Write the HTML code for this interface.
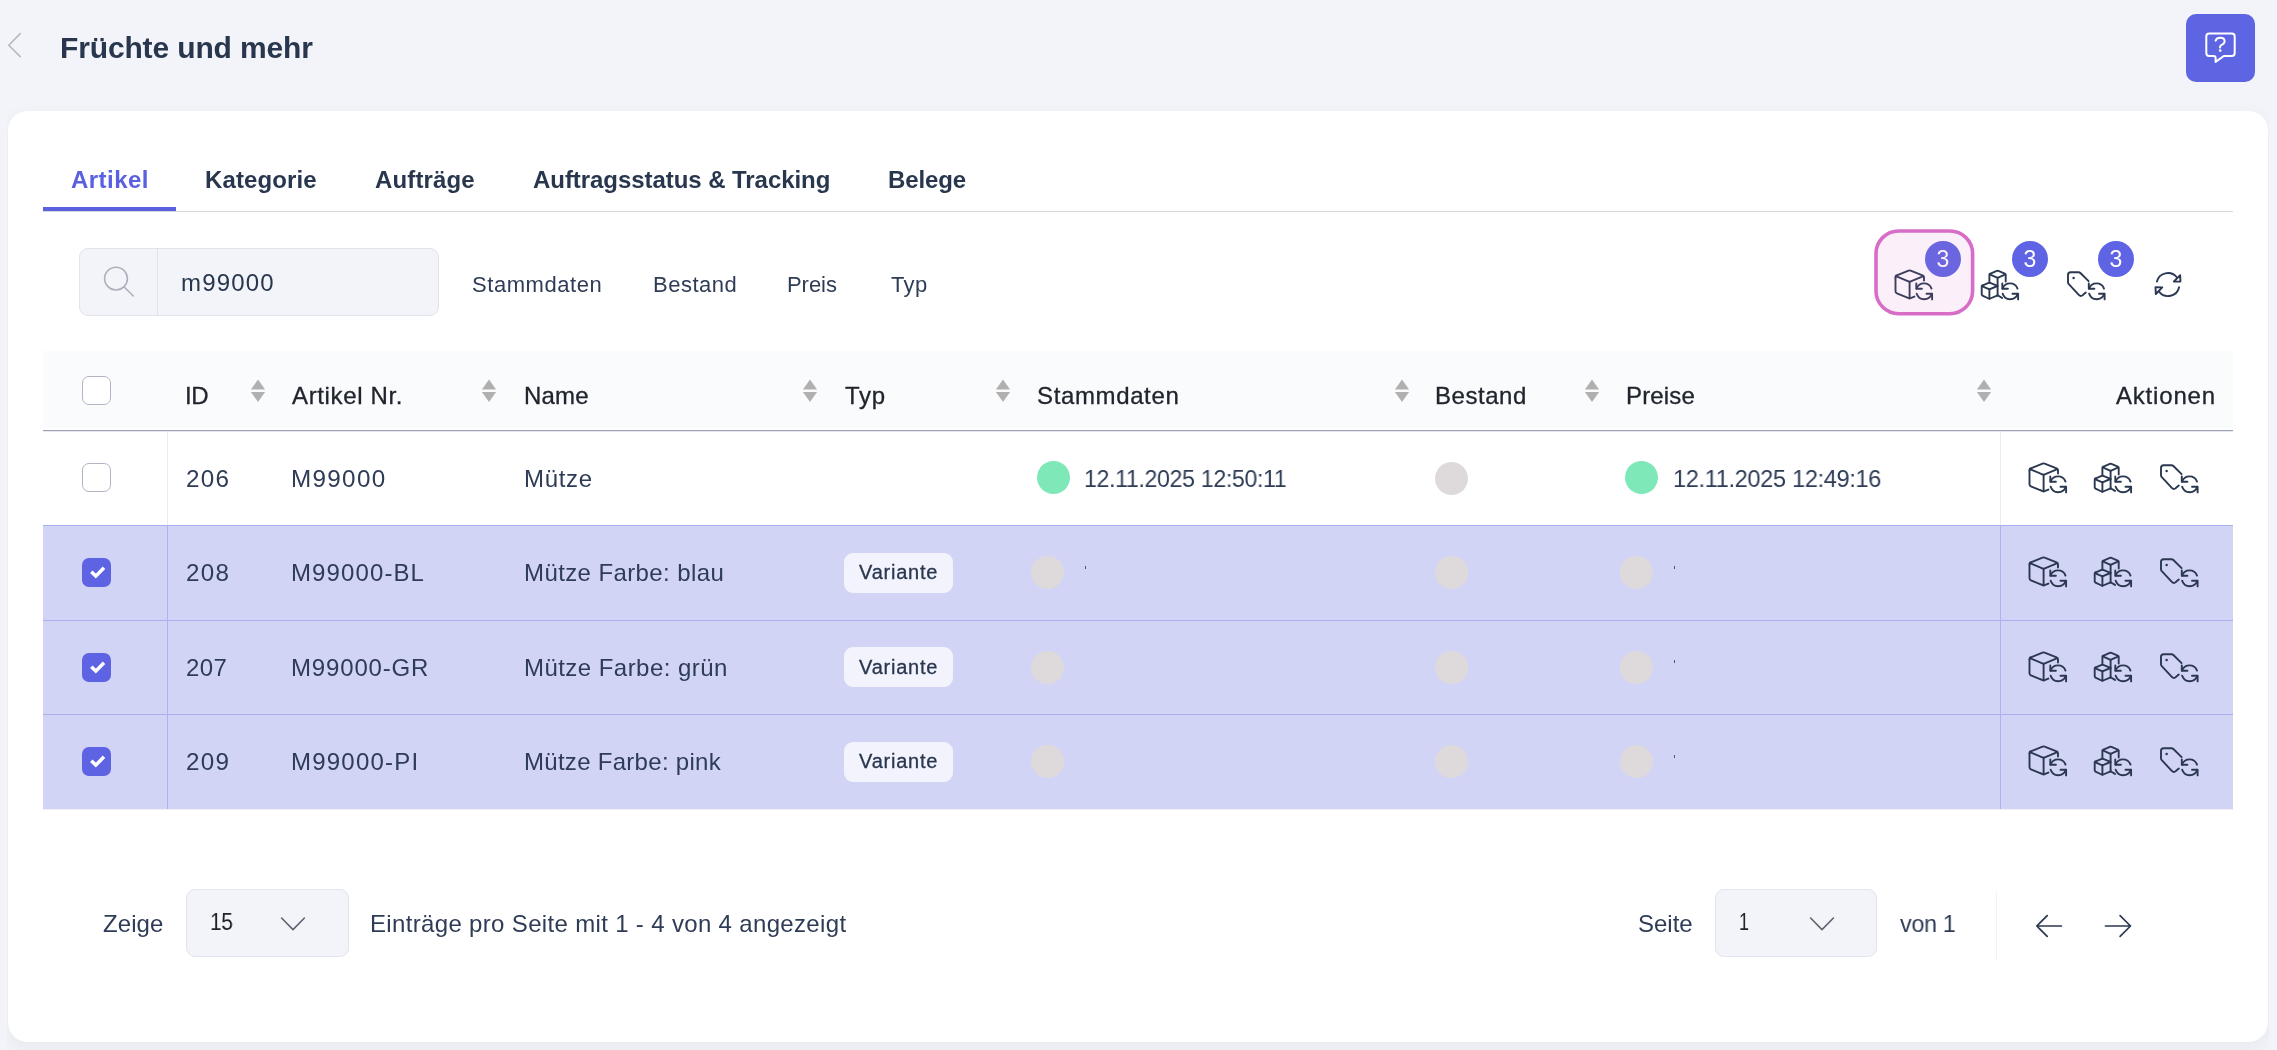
<!DOCTYPE html>
<html lang="de"><head><meta charset="utf-8"><title>Früchte und mehr</title>
<style>
html,body{margin:0;padding:0}
body{width:2277px;height:1050px;overflow:hidden;position:relative;background:#f3f4f9;font-family:"Liberation Sans",sans-serif;}
.t{position:absolute;line-height:40px;height:40px;white-space:nowrap;transform-origin:0 50%;will-change:transform;}
.abs{position:absolute;}
.ic{position:absolute;overflow:visible;}
.clip{position:absolute;left:7px;top:0;width:2262px;height:1050px;overflow:hidden;}
.card{position:absolute;left:1px;top:111px;width:2260px;height:931px;background:#fff;border-radius:20px;box-shadow:0 6px 20px rgba(30,40,80,0.055);}
.cb{position:absolute;width:27px;height:27px;border:1px solid #b3b5c4;border-radius:7px;background:#fff;}
.cbc{position:absolute;width:29px;height:29px;border-radius:7px;background:#5d63e3;}
.dot{position:absolute;width:33px;height:33px;border-radius:50%;}
.sel{position:absolute;height:68px;border:1px solid #e3e5ee;border-radius:9px;background:#f3f4f9;box-sizing:border-box;}
.badge{will-change:transform;position:absolute;width:36px;height:36px;border-radius:50%;background:#5e64e4;color:#fff;font-size:23px;line-height:36px;text-align:center;}
.var{position:absolute;width:109px;height:40px;border-radius:9px;background:#f3f3fd;}

</style></head><body>
<svg class="ic" style="left:6px;top:30px" width="20" height="30" viewBox="0 0 20 30" fill="none" stroke="#b7b8c6" stroke-width="1.6" stroke-linecap="round" stroke-linejoin="round"><path d="M14.2 3.6 L2.8 15.2 L14.2 26.6"/></svg>
<div class="t" style="left:60.40px;top:27.50px;font-size:30px;color:#29374e;font-weight:bold;letter-spacing:-0.143px;">Früchte und mehr</div>
<div class="abs" style="left:2186px;top:14px;width:69px;height:68px;border-radius:10px;background:#5e65e3"></div>
<svg class="ic" style="left:2200px;top:28px" width="40" height="40" viewBox="0 0 40 40" fill="none" stroke="#fff" stroke-width="2" stroke-linecap="round" stroke-linejoin="round"><path d="M9.2 5.6 H31.8 Q34.7 5.6 34.7 8.5 V25.1 Q34.7 28 31.8 28 H23.8 L15.6 33.9 V30 Q15.6 28 13.6 28 H9.2 Q6.3 28 6.3 25.1 V8.5 Q6.3 5.6 9.2 5.6 Z"/><path d="M15.6 12.6 Q16.6 9.8 20.2 9.8 Q24.6 9.8 24.6 13.2 Q24.6 15.4 22 16.6 Q20 17.6 20 19.4"/><circle cx="20.2" cy="22.6" r="1.3" fill="#fff" stroke="none"/></svg>
<div class="clip"><div class="card"></div></div>
<div class="t" style="left:71.00px;top:159.50px;font-size:24px;color:#5a60df;font-weight:bold;letter-spacing:0.462px;">Artikel</div>
<div class="t" style="left:205.00px;top:159.50px;font-size:24px;color:#29374e;font-weight:bold;letter-spacing:0.119px;">Kategorie</div>
<div class="t" style="left:375.00px;top:159.50px;font-size:24px;color:#29374e;font-weight:bold;letter-spacing:0.139px;">Aufträge</div>
<div class="t" style="left:533.30px;top:159.50px;font-size:24px;color:#29374e;font-weight:bold;letter-spacing:-0.057px;">Auftragsstatus &amp; Tracking</div>
<div class="t" style="left:888.30px;top:159.50px;font-size:24px;color:#29374e;font-weight:bold;letter-spacing:-0.131px;">Belege</div>
<div class="abs" style="left:43px;top:211px;width:2190px;height:1px;background:#d4d8df"></div>
<div class="abs" style="left:43px;top:207px;width:133px;height:4px;background:#5a60df"></div>
<div class="abs" style="left:79px;top:248px;width:360px;height:68px;box-sizing:border-box;border:1px solid #e1e3ec;border-radius:9px;background:#f3f4f9"></div>
<div class="abs" style="left:157px;top:249px;width:1px;height:66px;background:#e1e3ec"></div>
<svg class="ic" style="left:100px;top:262px" width="40" height="40" viewBox="0 0 40 40" fill="none" stroke="#aeafbd" stroke-width="1.6" stroke-linecap="round"><circle cx="16" cy="16.6" r="11.4"/><path d="M24.4 25.2 L33.2 34"/></svg>
<div class="t" style="left:181.30px;top:262.80px;font-size:24px;color:#29374e;letter-spacing:1.163px;">m99000</div>
<div class="t" style="left:471.60px;top:264.80px;font-size:22px;color:#2e3c56;letter-spacing:0.568px;">Stammdaten</div>
<div class="t" style="left:652.50px;top:264.80px;font-size:22px;color:#2e3c56;letter-spacing:0.501px;">Bestand</div>
<div class="t" style="left:787.40px;top:264.80px;font-size:22px;color:#2e3c56;letter-spacing:-0.056px;">Preis</div>
<div class="t" style="left:891.00px;top:264.80px;font-size:22px;color:#2e3c56;letter-spacing:0.388px;">Typ</div>
<svg class="ic" style="left:1894.00px;top:267.60px;color:#2b3850" width="40" height="33" viewBox="0 0 40 33" fill="none" stroke="currentColor" stroke-width="1.9" stroke-linecap="round" stroke-linejoin="round"><path d="M2.2 7.6 L14.6 2.6 Q15.6 2.2 16.6 2.6 L28.6 7.4 Q30 8 30 9.6 V12.6"/><path d="M1.9 8.2 L15.6 13.8 L29.4 8.2"/><path d="M15.6 13.8 V30.4"/><path d="M1.5 9.4 V23.2 Q1.5 24.7 2.9 25.3 L14.6 30.1 Q15.6 30.5 16.6 30.1 L20.4 28.6"/><path d="M1.5 9.4 Q1.5 8 2.2 7.6"/><g transform="translate(0 0)"><path d="M22.6 20.6 A7.9 7.9 0 0 1 37.5 20.6"/><path d="M22.3 15.4 V20.7 H27.9"/><path d="M22.6 25.6 A7.9 7.9 0 0 0 37.7 25.8"/><path d="M32.5 25.8 H38.1 V31.4"/></g></svg>
<svg class="ic" style="left:1981.00px;top:267.60px;color:#2b3850" width="40" height="33" viewBox="0 0 40 33" fill="none" stroke="currentColor" stroke-width="1.9" stroke-linecap="round" stroke-linejoin="round"><path d="M9 5.8 L15.8 2.9 Q16.6 2.6 17.4 2.9 L23.8 5.6 Q24.7 6 24.7 7 V13.6"/><path d="M8.7 6.4 L16.6 9.8 L24.4 6.4"/><path d="M8.4 7 Q8.4 6.1 9 5.8 M8.4 7 V14.6"/><path d="M16.6 9.8 V27.6"/><g transform="translate(0 -0.7)"><path d="M1.2 18.3 L7.6 15.6 Q8.4 15.3 9.2 15.6 L16.6 18.6"/><path d="M0.9 18.9 L8.4 22 L16.4 18.7"/><path d="M8.4 22 V31.4"/><path d="M0.7 19.6 Q0.7 18.6 1.2 18.3 M0.7 19.6 V27 Q0.7 27.9 1.5 28.3 L7.6 31.2 Q8.4 31.6 9.2 31.2 L16.6 28"/><path d="M16.6 28 L21 30.6"/></g><g transform="translate(-1.0 0)"><path d="M22.6 20.6 A7.9 7.9 0 0 1 37.5 20.6"/><path d="M22.3 15.4 V20.7 H27.9"/><path d="M22.6 25.6 A7.9 7.9 0 0 0 37.7 25.8"/><path d="M32.5 25.8 H38.1 V31.4"/></g></svg>
<svg class="ic" style="left:2067.20px;top:267.60px;color:#2b3850" width="40" height="33" viewBox="0 0 40 33" fill="none" stroke="currentColor" stroke-width="1.9" stroke-linecap="round" stroke-linejoin="round"><path d="M21.6 13.2 L13.4 5 Q12.6 4.2 11.4 4.2 H3.6 Q1 4.2 1 6.8 V14.2 Q1 15.4 1.8 16.2 L11.8 26.8 Q13.8 28.9 15.8 27.1 L18.8 24.6"/><circle cx="6.6" cy="10" r="1.25" fill="currentColor" stroke="none"/><g transform="translate(-0.5 0)"><path d="M22.6 20.6 A7.9 7.9 0 0 1 37.5 20.6"/><path d="M22.3 15.4 V20.7 H27.9"/><path d="M22.6 25.6 A7.9 7.9 0 0 0 37.7 25.8"/><path d="M32.5 25.8 H38.1 V31.4"/></g></svg>
<svg class="ic" style="left:2153.50px;top:272.40px;color:#2b3850" width="30" height="28" viewBox="0 0 30 28" fill="none" stroke="currentColor" stroke-width="1.9" stroke-linecap="round" stroke-linejoin="round"><path d="M2.9 9.6 A11.4 11.4 0 0 1 22.6 5"/><path d="M26.2 3.2 L26.4 9.6 L19.9 9.5 Z"/><path d="M25.1 15.2 A11.4 11.4 0 0 1 5.2 19.9"/><path d="M1.5 15.2 L8.3 15.4 L1.8 22 Z"/></svg>
<div class="badge" style="left:1925.0px;top:240.7px">3</div>
<div class="badge" style="left:2011.7px;top:240.7px">3</div>
<div class="badge" style="left:2098.0px;top:240.7px">3</div>
<svg class="ic" style="left:1870px;top:225px" width="110" height="96" viewBox="0 0 110 96"><rect x="6" y="6" width="96.6" height="82.7" rx="22.6" fill="#d86dc7" fill-opacity="0.105" stroke="#d86dc7" stroke-width="3.6"/></svg>
<div class="abs" style="left:43px;top:351px;width:2190px;height:78px;background:#fafbfd"></div>
<div class="abs" style="left:43px;top:428px;width:2190px;height:1px;background:#fcfdfe"></div>
<div class="abs" style="left:43px;top:430px;width:2190px;height:1px;background:#9ba2b5"></div>
<div class="abs" style="left:43px;top:431px;width:2190px;height:1px;background:#e6e8ee"></div>
<div class="abs" style="left:43px;top:809px;width:2190px;height:1px;background:#f1f1f4"></div>
<div class="abs" style="left:43px;top:525px;width:2190px;height:95px;background:#d2d4f6;border-top:1px solid #abaff0;box-sizing:border-box"></div>
<div class="abs" style="left:43px;top:620px;width:2190px;height:94px;background:#d2d4f6;border-top:1px solid #abaff0;box-sizing:border-box"></div>
<div class="abs" style="left:43px;top:714px;width:2190px;height:95px;background:#d2d4f6;border-top:1px solid #abaff0;box-sizing:border-box"></div>
<div class="abs" style="left:167px;top:432px;width:1px;height:93px;background:#ececf2"></div>
<div class="abs" style="left:2000px;top:432px;width:1px;height:93px;background:#ececf2"></div>
<div class="abs" style="left:167px;top:525px;width:1px;height:284px;background:#adb1f1"></div>
<div class="abs" style="left:2000px;top:525px;width:1px;height:284px;background:#adb1f1"></div>
<div class="cb" style="left:82px;top:376px"></div>
<div class="t" style="left:185.22px;top:376.30px;font-size:24px;color:#20252d;letter-spacing:-0.350px;transform:scaleX(0.9898);-webkit-text-stroke:0.3px #20252d;">ID</div>
<svg class="ic" style="left:249.5px;top:378px" width="16" height="26" viewBox="0 0 16 26"><path d="M8 1.5 L15.1 11.5 H0.9 Z M0.9 14.1 H15.1 L8 23.9 Z" fill="#b0b0b0"/></svg>
<div class="t" style="left:292.30px;top:376.30px;font-size:24px;color:#20252d;letter-spacing:0.635px;-webkit-text-stroke:0.3px #20252d;">Artikel Nr.</div>
<svg class="ic" style="left:481.2px;top:378px" width="16" height="26" viewBox="0 0 16 26"><path d="M8 1.5 L15.1 11.5 H0.9 Z M0.9 14.1 H15.1 L8 23.9 Z" fill="#b0b0b0"/></svg>
<div class="t" style="left:524.00px;top:376.30px;font-size:24px;color:#20252d;letter-spacing:0.209px;-webkit-text-stroke:0.3px #20252d;">Name</div>
<svg class="ic" style="left:802.4px;top:378px" width="16" height="26" viewBox="0 0 16 26"><path d="M8 1.5 L15.1 11.5 H0.9 Z M0.9 14.1 H15.1 L8 23.9 Z" fill="#b0b0b0"/></svg>
<div class="t" style="left:844.80px;top:376.30px;font-size:24px;color:#20252d;letter-spacing:0.682px;-webkit-text-stroke:0.3px #20252d;">Typ</div>
<svg class="ic" style="left:995.1px;top:378px" width="16" height="26" viewBox="0 0 16 26"><path d="M8 1.5 L15.1 11.5 H0.9 Z M0.9 14.1 H15.1 L8 23.9 Z" fill="#b0b0b0"/></svg>
<div class="t" style="left:1037.30px;top:376.30px;font-size:24px;color:#20252d;letter-spacing:0.631px;-webkit-text-stroke:0.3px #20252d;">Stammdaten</div>
<svg class="ic" style="left:1393.9px;top:378px" width="16" height="26" viewBox="0 0 16 26"><path d="M8 1.5 L15.1 11.5 H0.9 Z M0.9 14.1 H15.1 L8 23.9 Z" fill="#b0b0b0"/></svg>
<div class="t" style="left:1435.30px;top:376.30px;font-size:24px;color:#20252d;letter-spacing:0.547px;-webkit-text-stroke:0.3px #20252d;">Bestand</div>
<svg class="ic" style="left:1583.9px;top:378px" width="16" height="26" viewBox="0 0 16 26"><path d="M8 1.5 L15.1 11.5 H0.9 Z M0.9 14.1 H15.1 L8 23.9 Z" fill="#b0b0b0"/></svg>
<div class="t" style="left:1626.30px;top:376.30px;font-size:24px;color:#20252d;letter-spacing:0.144px;-webkit-text-stroke:0.3px #20252d;">Preise</div>
<svg class="ic" style="left:1975.9px;top:378px" width="16" height="26" viewBox="0 0 16 26"><path d="M8 1.5 L15.1 11.5 H0.9 Z M0.9 14.1 H15.1 L8 23.9 Z" fill="#b0b0b0"/></svg>
<div class="t" style="left:2116.20px;top:376.30px;font-size:24px;color:#20252d;letter-spacing:0.807px;-webkit-text-stroke:0.3px #20252d;">Aktionen</div>
<div class="cb" style="left:82px;top:463.00px"></div>
<div class="t" style="left:185.59px;top:458.50px;font-size:24px;color:#2e3c56;letter-spacing:1.300px;transform:scaleX(1.0098);">206</div>
<div class="t" style="left:291.19px;top:458.50px;font-size:24px;color:#2e3c56;letter-spacing:1.300px;transform:scaleX(1.0100);">M99000</div>
<div class="t" style="left:524.00px;top:458.50px;font-size:24px;color:#2e3c56;letter-spacing:0.673px;">Mütze</div>
<div class="dot" style="left:1037.0px;top:461.00px;background:#7fe8b9"></div>
<div class="t" style="left:1084.24px;top:458.50px;font-size:24px;color:#2e3c56;letter-spacing:-0.350px;transform:scaleX(0.9637);">12.11.2025 12:50:11</div>
<div class="dot" style="left:1434.8px;top:461.50px;background:#dedadb"></div>
<div class="dot" style="left:1625.3px;top:461.00px;background:#7fe8b9"></div>
<div class="t" style="left:1672.72px;top:458.50px;font-size:24px;color:#2e3c56;letter-spacing:-0.350px;transform:scaleX(0.9821);">12.11.2025 12:49:16</div>
<svg class="ic" style="left:2028.20px;top:460.70px;color:#2b3850" width="40" height="33" viewBox="0 0 40 33" fill="none" stroke="currentColor" stroke-width="1.9" stroke-linecap="round" stroke-linejoin="round"><path d="M2.2 7.6 L14.6 2.6 Q15.6 2.2 16.6 2.6 L28.6 7.4 Q30 8 30 9.6 V12.6"/><path d="M1.9 8.2 L15.6 13.8 L29.4 8.2"/><path d="M15.6 13.8 V30.4"/><path d="M1.5 9.4 V23.2 Q1.5 24.7 2.9 25.3 L14.6 30.1 Q15.6 30.5 16.6 30.1 L20.4 28.6"/><path d="M1.5 9.4 Q1.5 8 2.2 7.6"/><g transform="translate(0 0)"><path d="M22.6 20.6 A7.9 7.9 0 0 1 37.5 20.6"/><path d="M22.3 15.4 V20.7 H27.9"/><path d="M22.6 25.6 A7.9 7.9 0 0 0 37.7 25.8"/><path d="M32.5 25.8 H38.1 V31.4"/></g></svg>
<svg class="ic" style="left:2094.00px;top:460.70px;color:#2b3850" width="40" height="33" viewBox="0 0 40 33" fill="none" stroke="currentColor" stroke-width="1.9" stroke-linecap="round" stroke-linejoin="round"><path d="M9 5.8 L15.8 2.9 Q16.6 2.6 17.4 2.9 L23.8 5.6 Q24.7 6 24.7 7 V13.6"/><path d="M8.7 6.4 L16.6 9.8 L24.4 6.4"/><path d="M8.4 7 Q8.4 6.1 9 5.8 M8.4 7 V14.6"/><path d="M16.6 9.8 V27.6"/><g transform="translate(0 -0.7)"><path d="M1.2 18.3 L7.6 15.6 Q8.4 15.3 9.2 15.6 L16.6 18.6"/><path d="M0.9 18.9 L8.4 22 L16.4 18.7"/><path d="M8.4 22 V31.4"/><path d="M0.7 19.6 Q0.7 18.6 1.2 18.3 M0.7 19.6 V27 Q0.7 27.9 1.5 28.3 L7.6 31.2 Q8.4 31.6 9.2 31.2 L16.6 28"/><path d="M16.6 28 L21 30.6"/></g><g transform="translate(-1.0 0)"><path d="M22.6 20.6 A7.9 7.9 0 0 1 37.5 20.6"/><path d="M22.3 15.4 V20.7 H27.9"/><path d="M22.6 25.6 A7.9 7.9 0 0 0 37.7 25.8"/><path d="M32.5 25.8 H38.1 V31.4"/></g></svg>
<svg class="ic" style="left:2159.60px;top:460.70px;color:#2b3850" width="40" height="33" viewBox="0 0 40 33" fill="none" stroke="currentColor" stroke-width="1.9" stroke-linecap="round" stroke-linejoin="round"><path d="M21.6 13.2 L13.4 5 Q12.6 4.2 11.4 4.2 H3.6 Q1 4.2 1 6.8 V14.2 Q1 15.4 1.8 16.2 L11.8 26.8 Q13.8 28.9 15.8 27.1 L18.8 24.6"/><circle cx="6.6" cy="10" r="1.25" fill="currentColor" stroke="none"/><g transform="translate(-0.5 0)"><path d="M22.6 20.6 A7.9 7.9 0 0 1 37.5 20.6"/><path d="M22.3 15.4 V20.7 H27.9"/><path d="M22.6 25.6 A7.9 7.9 0 0 0 37.7 25.8"/><path d="M32.5 25.8 H38.1 V31.4"/></g></svg>
<div class="cbc" style="left:82px;top:558.00px"><svg width="29" height="29" viewBox="0 0 29 29" fill="none" stroke="#fff" stroke-width="3.5" stroke-linecap="butt" stroke-linejoin="miter"><path d="M9.3 13.7 L13.8 18.1 L22 9.7"/></svg></div>
<div class="t" style="left:185.59px;top:553.00px;font-size:24px;color:#2e3c56;letter-spacing:1.300px;transform:scaleX(1.0074);">208</div>
<div class="t" style="left:291.20px;top:553.00px;font-size:24px;color:#2e3c56;letter-spacing:1.109px;">M99000-BL</div>
<div class="t" style="left:524.00px;top:553.00px;font-size:24px;color:#2e3c56;letter-spacing:0.395px;">Mütze Farbe: blau</div>
<div class="var" style="left:844px;top:552.50px"></div>
<div class="t" style="left:859.40px;top:552.30px;font-size:20px;color:#29374e;letter-spacing:0.774px;-webkit-text-stroke:0.3px #29374e;">Variante</div>
<div class="dot" style="left:1030.7px;top:556.00px;background:#dedadb"></div>
<div class="dot" style="left:1434.8px;top:556.00px;background:#dedadb"></div>
<div class="dot" style="left:1619.9px;top:556.00px;background:#dedadb"></div>
<div class="abs" style="left:1674px;top:565.50px;width:1px;height:3px;background:#4a5670"></div>
<div class="abs" style="left:1084.5px;top:565.50px;width:1px;height:3px;background:#4a5670"></div>
<svg class="ic" style="left:2028.20px;top:555.20px;color:#2b3850" width="40" height="33" viewBox="0 0 40 33" fill="none" stroke="currentColor" stroke-width="1.9" stroke-linecap="round" stroke-linejoin="round"><path d="M2.2 7.6 L14.6 2.6 Q15.6 2.2 16.6 2.6 L28.6 7.4 Q30 8 30 9.6 V12.6"/><path d="M1.9 8.2 L15.6 13.8 L29.4 8.2"/><path d="M15.6 13.8 V30.4"/><path d="M1.5 9.4 V23.2 Q1.5 24.7 2.9 25.3 L14.6 30.1 Q15.6 30.5 16.6 30.1 L20.4 28.6"/><path d="M1.5 9.4 Q1.5 8 2.2 7.6"/><g transform="translate(0 0)"><path d="M22.6 20.6 A7.9 7.9 0 0 1 37.5 20.6"/><path d="M22.3 15.4 V20.7 H27.9"/><path d="M22.6 25.6 A7.9 7.9 0 0 0 37.7 25.8"/><path d="M32.5 25.8 H38.1 V31.4"/></g></svg>
<svg class="ic" style="left:2094.00px;top:555.20px;color:#2b3850" width="40" height="33" viewBox="0 0 40 33" fill="none" stroke="currentColor" stroke-width="1.9" stroke-linecap="round" stroke-linejoin="round"><path d="M9 5.8 L15.8 2.9 Q16.6 2.6 17.4 2.9 L23.8 5.6 Q24.7 6 24.7 7 V13.6"/><path d="M8.7 6.4 L16.6 9.8 L24.4 6.4"/><path d="M8.4 7 Q8.4 6.1 9 5.8 M8.4 7 V14.6"/><path d="M16.6 9.8 V27.6"/><g transform="translate(0 -0.7)"><path d="M1.2 18.3 L7.6 15.6 Q8.4 15.3 9.2 15.6 L16.6 18.6"/><path d="M0.9 18.9 L8.4 22 L16.4 18.7"/><path d="M8.4 22 V31.4"/><path d="M0.7 19.6 Q0.7 18.6 1.2 18.3 M0.7 19.6 V27 Q0.7 27.9 1.5 28.3 L7.6 31.2 Q8.4 31.6 9.2 31.2 L16.6 28"/><path d="M16.6 28 L21 30.6"/></g><g transform="translate(-1.0 0)"><path d="M22.6 20.6 A7.9 7.9 0 0 1 37.5 20.6"/><path d="M22.3 15.4 V20.7 H27.9"/><path d="M22.6 25.6 A7.9 7.9 0 0 0 37.7 25.8"/><path d="M32.5 25.8 H38.1 V31.4"/></g></svg>
<svg class="ic" style="left:2159.60px;top:555.20px;color:#2b3850" width="40" height="33" viewBox="0 0 40 33" fill="none" stroke="currentColor" stroke-width="1.9" stroke-linecap="round" stroke-linejoin="round"><path d="M21.6 13.2 L13.4 5 Q12.6 4.2 11.4 4.2 H3.6 Q1 4.2 1 6.8 V14.2 Q1 15.4 1.8 16.2 L11.8 26.8 Q13.8 28.9 15.8 27.1 L18.8 24.6"/><circle cx="6.6" cy="10" r="1.25" fill="currentColor" stroke="none"/><g transform="translate(-0.5 0)"><path d="M22.6 20.6 A7.9 7.9 0 0 1 37.5 20.6"/><path d="M22.3 15.4 V20.7 H27.9"/><path d="M22.6 25.6 A7.9 7.9 0 0 0 37.7 25.8"/><path d="M32.5 25.8 H38.1 V31.4"/></g></svg>
<div class="cbc" style="left:82px;top:652.50px"><svg width="29" height="29" viewBox="0 0 29 29" fill="none" stroke="#fff" stroke-width="3.5" stroke-linecap="butt" stroke-linejoin="miter"><path d="M9.3 13.7 L13.8 18.1 L22 9.7"/></svg></div>
<div class="t" style="left:185.60px;top:647.50px;font-size:24px;color:#2e3c56;letter-spacing:0.452px;">207</div>
<div class="t" style="left:291.20px;top:647.50px;font-size:24px;color:#2e3c56;letter-spacing:0.839px;">M99000-GR</div>
<div class="t" style="left:524.00px;top:647.50px;font-size:24px;color:#2e3c56;letter-spacing:0.454px;">Mütze Farbe: grün</div>
<div class="var" style="left:844px;top:647.00px"></div>
<div class="t" style="left:859.40px;top:646.80px;font-size:20px;color:#29374e;letter-spacing:0.774px;-webkit-text-stroke:0.3px #29374e;">Variante</div>
<div class="dot" style="left:1030.7px;top:650.50px;background:#dedadb"></div>
<div class="dot" style="left:1434.8px;top:650.50px;background:#dedadb"></div>
<div class="dot" style="left:1619.9px;top:650.50px;background:#dedadb"></div>
<div class="abs" style="left:1674px;top:660.00px;width:1px;height:3px;background:#4a5670"></div>
<svg class="ic" style="left:2028.20px;top:649.70px;color:#2b3850" width="40" height="33" viewBox="0 0 40 33" fill="none" stroke="currentColor" stroke-width="1.9" stroke-linecap="round" stroke-linejoin="round"><path d="M2.2 7.6 L14.6 2.6 Q15.6 2.2 16.6 2.6 L28.6 7.4 Q30 8 30 9.6 V12.6"/><path d="M1.9 8.2 L15.6 13.8 L29.4 8.2"/><path d="M15.6 13.8 V30.4"/><path d="M1.5 9.4 V23.2 Q1.5 24.7 2.9 25.3 L14.6 30.1 Q15.6 30.5 16.6 30.1 L20.4 28.6"/><path d="M1.5 9.4 Q1.5 8 2.2 7.6"/><g transform="translate(0 0)"><path d="M22.6 20.6 A7.9 7.9 0 0 1 37.5 20.6"/><path d="M22.3 15.4 V20.7 H27.9"/><path d="M22.6 25.6 A7.9 7.9 0 0 0 37.7 25.8"/><path d="M32.5 25.8 H38.1 V31.4"/></g></svg>
<svg class="ic" style="left:2094.00px;top:649.70px;color:#2b3850" width="40" height="33" viewBox="0 0 40 33" fill="none" stroke="currentColor" stroke-width="1.9" stroke-linecap="round" stroke-linejoin="round"><path d="M9 5.8 L15.8 2.9 Q16.6 2.6 17.4 2.9 L23.8 5.6 Q24.7 6 24.7 7 V13.6"/><path d="M8.7 6.4 L16.6 9.8 L24.4 6.4"/><path d="M8.4 7 Q8.4 6.1 9 5.8 M8.4 7 V14.6"/><path d="M16.6 9.8 V27.6"/><g transform="translate(0 -0.7)"><path d="M1.2 18.3 L7.6 15.6 Q8.4 15.3 9.2 15.6 L16.6 18.6"/><path d="M0.9 18.9 L8.4 22 L16.4 18.7"/><path d="M8.4 22 V31.4"/><path d="M0.7 19.6 Q0.7 18.6 1.2 18.3 M0.7 19.6 V27 Q0.7 27.9 1.5 28.3 L7.6 31.2 Q8.4 31.6 9.2 31.2 L16.6 28"/><path d="M16.6 28 L21 30.6"/></g><g transform="translate(-1.0 0)"><path d="M22.6 20.6 A7.9 7.9 0 0 1 37.5 20.6"/><path d="M22.3 15.4 V20.7 H27.9"/><path d="M22.6 25.6 A7.9 7.9 0 0 0 37.7 25.8"/><path d="M32.5 25.8 H38.1 V31.4"/></g></svg>
<svg class="ic" style="left:2159.60px;top:649.70px;color:#2b3850" width="40" height="33" viewBox="0 0 40 33" fill="none" stroke="currentColor" stroke-width="1.9" stroke-linecap="round" stroke-linejoin="round"><path d="M21.6 13.2 L13.4 5 Q12.6 4.2 11.4 4.2 H3.6 Q1 4.2 1 6.8 V14.2 Q1 15.4 1.8 16.2 L11.8 26.8 Q13.8 28.9 15.8 27.1 L18.8 24.6"/><circle cx="6.6" cy="10" r="1.25" fill="currentColor" stroke="none"/><g transform="translate(-0.5 0)"><path d="M22.6 20.6 A7.9 7.9 0 0 1 37.5 20.6"/><path d="M22.3 15.4 V20.7 H27.9"/><path d="M22.6 25.6 A7.9 7.9 0 0 0 37.7 25.8"/><path d="M32.5 25.8 H38.1 V31.4"/></g></svg>
<div class="cbc" style="left:82px;top:747.00px"><svg width="29" height="29" viewBox="0 0 29 29" fill="none" stroke="#fff" stroke-width="3.5" stroke-linecap="butt" stroke-linejoin="miter"><path d="M9.3 13.7 L13.8 18.1 L22 9.7"/></svg></div>
<div class="t" style="left:185.59px;top:742.00px;font-size:24px;color:#2e3c56;letter-spacing:1.300px;transform:scaleX(1.0098);">209</div>
<div class="t" style="left:291.20px;top:742.00px;font-size:24px;color:#2e3c56;letter-spacing:1.221px;">M99000-PI</div>
<div class="t" style="left:524.00px;top:742.00px;font-size:24px;color:#2e3c56;letter-spacing:0.289px;">Mütze Farbe: pink</div>
<div class="var" style="left:844px;top:741.50px"></div>
<div class="t" style="left:859.40px;top:741.30px;font-size:20px;color:#29374e;letter-spacing:0.774px;-webkit-text-stroke:0.3px #29374e;">Variante</div>
<div class="dot" style="left:1030.7px;top:745.00px;background:#dedadb"></div>
<div class="dot" style="left:1434.8px;top:745.00px;background:#dedadb"></div>
<div class="dot" style="left:1619.9px;top:745.00px;background:#dedadb"></div>
<div class="abs" style="left:1674px;top:754.50px;width:1px;height:3px;background:#4a5670"></div>
<svg class="ic" style="left:2028.20px;top:744.20px;color:#2b3850" width="40" height="33" viewBox="0 0 40 33" fill="none" stroke="currentColor" stroke-width="1.9" stroke-linecap="round" stroke-linejoin="round"><path d="M2.2 7.6 L14.6 2.6 Q15.6 2.2 16.6 2.6 L28.6 7.4 Q30 8 30 9.6 V12.6"/><path d="M1.9 8.2 L15.6 13.8 L29.4 8.2"/><path d="M15.6 13.8 V30.4"/><path d="M1.5 9.4 V23.2 Q1.5 24.7 2.9 25.3 L14.6 30.1 Q15.6 30.5 16.6 30.1 L20.4 28.6"/><path d="M1.5 9.4 Q1.5 8 2.2 7.6"/><g transform="translate(0 0)"><path d="M22.6 20.6 A7.9 7.9 0 0 1 37.5 20.6"/><path d="M22.3 15.4 V20.7 H27.9"/><path d="M22.6 25.6 A7.9 7.9 0 0 0 37.7 25.8"/><path d="M32.5 25.8 H38.1 V31.4"/></g></svg>
<svg class="ic" style="left:2094.00px;top:744.20px;color:#2b3850" width="40" height="33" viewBox="0 0 40 33" fill="none" stroke="currentColor" stroke-width="1.9" stroke-linecap="round" stroke-linejoin="round"><path d="M9 5.8 L15.8 2.9 Q16.6 2.6 17.4 2.9 L23.8 5.6 Q24.7 6 24.7 7 V13.6"/><path d="M8.7 6.4 L16.6 9.8 L24.4 6.4"/><path d="M8.4 7 Q8.4 6.1 9 5.8 M8.4 7 V14.6"/><path d="M16.6 9.8 V27.6"/><g transform="translate(0 -0.7)"><path d="M1.2 18.3 L7.6 15.6 Q8.4 15.3 9.2 15.6 L16.6 18.6"/><path d="M0.9 18.9 L8.4 22 L16.4 18.7"/><path d="M8.4 22 V31.4"/><path d="M0.7 19.6 Q0.7 18.6 1.2 18.3 M0.7 19.6 V27 Q0.7 27.9 1.5 28.3 L7.6 31.2 Q8.4 31.6 9.2 31.2 L16.6 28"/><path d="M16.6 28 L21 30.6"/></g><g transform="translate(-1.0 0)"><path d="M22.6 20.6 A7.9 7.9 0 0 1 37.5 20.6"/><path d="M22.3 15.4 V20.7 H27.9"/><path d="M22.6 25.6 A7.9 7.9 0 0 0 37.7 25.8"/><path d="M32.5 25.8 H38.1 V31.4"/></g></svg>
<svg class="ic" style="left:2159.60px;top:744.20px;color:#2b3850" width="40" height="33" viewBox="0 0 40 33" fill="none" stroke="currentColor" stroke-width="1.9" stroke-linecap="round" stroke-linejoin="round"><path d="M21.6 13.2 L13.4 5 Q12.6 4.2 11.4 4.2 H3.6 Q1 4.2 1 6.8 V14.2 Q1 15.4 1.8 16.2 L11.8 26.8 Q13.8 28.9 15.8 27.1 L18.8 24.6"/><circle cx="6.6" cy="10" r="1.25" fill="currentColor" stroke="none"/><g transform="translate(-0.5 0)"><path d="M22.6 20.6 A7.9 7.9 0 0 1 37.5 20.6"/><path d="M22.3 15.4 V20.7 H27.9"/><path d="M22.6 25.6 A7.9 7.9 0 0 0 37.7 25.8"/><path d="M32.5 25.8 H38.1 V31.4"/></g></svg>
<div class="t" style="left:103.30px;top:903.60px;font-size:24px;color:#2e3c56;letter-spacing:0.078px;">Zeige</div>
<div class="sel" style="left:186px;top:889px;width:163px"></div>
<div class="t" style="left:210.13px;top:902.10px;font-size:24px;color:#1f2228;letter-spacing:-0.350px;transform:scaleX(0.8681);">15</div>
<svg class="ic" style="left:279px;top:914px" width="28" height="20" viewBox="0 0 28 20" fill="none" stroke="#5d6372" stroke-width="1.6" stroke-linecap="round" stroke-linejoin="round"><path d="M2.6 4 L14 15.6 L25.4 4"/></svg>
<div class="t" style="left:369.60px;top:903.60px;font-size:24px;color:#2e3c56;letter-spacing:0.336px;">Einträge pro Seite mit 1 - 4 von 4 angezeigt</div>
<div class="t" style="left:1637.70px;top:903.60px;font-size:24px;color:#2e3c56;letter-spacing:-0.014px;">Seite</div>
<div class="sel" style="left:1715px;top:889px;width:162px"></div>
<div class="t" style="left:1738.96px;top:902.10px;font-size:24px;color:#1f2228;transform:scaleX(0.7417);">1</div>
<svg class="ic" style="left:1808px;top:914px" width="28" height="20" viewBox="0 0 28 20" fill="none" stroke="#5d6372" stroke-width="1.6" stroke-linecap="round" stroke-linejoin="round"><path d="M2.6 4 L14 15.6 L25.4 4"/></svg>
<div class="t" style="left:1900.30px;top:903.60px;font-size:24px;color:#2e3c56;letter-spacing:-0.350px;transform:scaleX(0.9726);">von 1</div>
<div class="abs" style="left:1996px;top:891px;width:1px;height:70px;background:#f1f2f6"></div>
<svg class="ic" style="left:2034px;top:912px" width="32" height="28" viewBox="0 0 32 28" fill="none" stroke="#2b3850" stroke-width="1.7" stroke-linecap="round" stroke-linejoin="round"><path d="M27.4 14 H3 M13.2 3.6 L2.8 14 L13.2 24.4"/></svg>
<svg class="ic" style="left:2103px;top:912px" width="32" height="28" viewBox="0 0 32 28" fill="none" stroke="#2b3850" stroke-width="1.7" stroke-linecap="round" stroke-linejoin="round"><path d="M2.5 14 H27.3 M17.1 3.6 L27.5 14 L17.1 24.4"/></svg>
</body></html>
